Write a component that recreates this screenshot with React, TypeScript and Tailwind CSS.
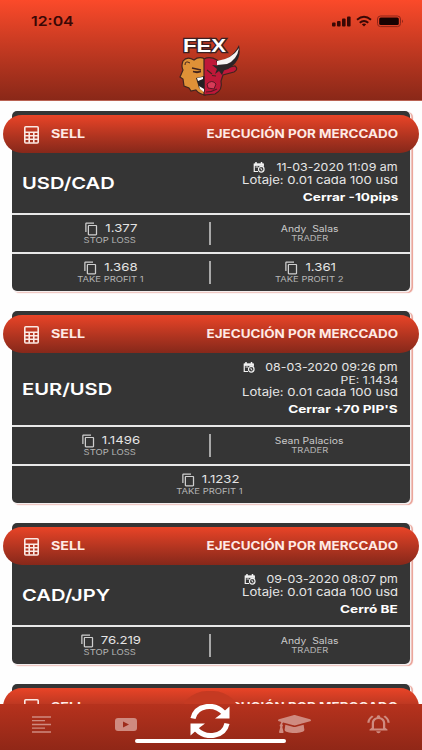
import React from "react";
import { MdContentCopy, MdOutlineNotificationsActive } from "react-icons/md";
import { FaGraduationCap } from "react-icons/fa";

type Signal = {
  pair: string;
  date: string;
  pe?: string;
  result: string;
  stop: string;
  trader: string;
  profits: string[];
  infoHeight: string;
};

const signals: Signal[] = [
  { pair: "USD/CAD", date: "11-03-2020 11:09 am", result: "Cerrar -10pips", stop: "1.377", trader: "Andy  Salas", profits: ["1.368", "1.361"], infoHeight: "h-[60px]" },
  { pair: "EUR/USD", date: "08-03-2020 09:26 pm", pe: "PE: 1.1434", result: "Cerrar +70 PIP'S", stop: "1.1496", trader: "Sean Palacios", profits: ["1.1232"], infoHeight: "h-[72px]" },
  { pair: "CAD/JPY", date: "09-03-2020 08:07 pm", result: "Cerró BE", stop: "76.219", trader: "Andy  Salas", profits: [], infoHeight: "h-[60px]" },
];

function Wide({ children, className = "scale-x-[1.2]" }: { children: React.ReactNode; className?: string }) {
  return <span className={`inline-block whitespace-pre ${className}`}>{children}</span>;
}

function Calculator() {
  return (
    <svg className="h-[18px] w-[15px]" viewBox="0 0 15 18" fill="none" stroke="#fbe9e4" strokeWidth="1.6">
      <rect x="0.8" y="0.8" width="13.4" height="16.2" rx="1" />
      <path d="M1 6.3h13M1 9.8h13M1 13.3h13M5.2 6.3v10.5M9.8 6.3v10.5" />
    </svg>
  );
}

function CalendarClock() {
  return (
    <svg className="h-[11px] w-[12px]" viewBox="0 0 24 22" fill="none" stroke="#f2f2f2" strokeWidth="2.4">
      <path d="M10 19H2.5V4h18v5" />
      <path d="M2 5.5h19" strokeWidth="4.5" />
      <path d="M6 0v5M17 0v5" strokeWidth="3" />
      <circle cx="16.5" cy="14.5" r="5.6" />
      <path d="M16 11.5v3.4l3 1.6M5 10h5" strokeWidth="2" />
    </svg>
  );
}

function Price({ value, label }: { value: string; label: string }) {
  return (
    <div className="flex flex-1 flex-col items-center pt-[7px] pr-[2px]">
      <div className="flex h-[13px] items-center gap-[9px] pr-[2px] text-[11px] text-[#e4e4e4]">
        <MdContentCopy className="mt-[2px] h-[14px] w-[15px] text-[#cfcfcf]" preserveAspectRatio="none" />
        <Wide>{value}</Wide>
      </div>
      <Wide className="scale-x-[1.26] text-[7.5px] leading-[11px] text-[#b5b5b5]">{label}</Wide>
    </div>
  );
}

function Divider() {
  return <div className="mt-[7px] -ml-[1px] h-[23px] w-[2px] bg-[#a8a8a8]" />;
}

function Pill() {
  return (
    <div className="-mx-[9px] flex h-[38px] items-center rounded-[20px] bg-gradient-to-b from-[#e94427] to-[#86281a] pt-[2px] pr-[21px] pl-[21px] text-[11.5px] font-bold text-[#ffeae5]">
      <Calculator />
      <Wide className="ml-[12px] origin-left scale-x-[1.24]">SELL</Wide>
      <Wide className="ml-auto origin-right scale-x-[1.167]">EJECUCIÓN POR MERCCADO</Wide>
    </div>
  );
}

function Card({ s }: { s: Signal }) {
  return (
    <section className="rounded-[5px] bg-[#353535] pt-[3.5px] shadow-[1px_1px_0_0.5px_#f4eeee,2.5px_1.5px_1px_0.5px_#e99c90]">
      <Pill />
      <div className={`flex justify-between pr-[11.5px] pl-[10px] ${s.infoHeight}`}>
        <div className="flex items-center pt-[1px] text-[16.5px] font-semibold text-white">
          <Wide className="origin-left scale-x-[1.22]">{s.pair}</Wide>
        </div>
        <div className="flex flex-col items-end pt-[8px] text-[11px] leading-[13px] text-[#e6e6e6]">
          <div className="flex items-center gap-[25px]">
            <CalendarClock />
            <Wide className="origin-right scale-x-[1.125]">{s.date}</Wide>
          </div>
          {s.pe && <Wide className="h-[12px] origin-right scale-x-[1.22] text-[10px]">{s.pe}</Wide>}
          <Wide className="origin-right scale-x-[1.19]">Lotaje: 0.01 cada 100 usd</Wide>
          <Wide className="mt-[4px] origin-right scale-x-[1.235] font-bold text-white">{s.result}</Wide>
        </div>
      </div>
      <div className="flex h-[39px] border-t-2 border-[#e8e8e8]">
        <Price value={s.stop} label="STOP LOSS" />
        <Divider />
        <div className="flex flex-1 flex-col items-center pt-[9px] pr-[2px] text-[#c9c9c9]">
          <Wide className="scale-x-[1.22] text-[8.5px] leading-[11px]">{s.trader}</Wide>
          <Wide className="scale-x-[1.25] text-[7.5px] leading-[8px] text-[#b5b5b5]">TRADER</Wide>
        </div>
      </div>
      {s.profits.length > 0 && (
        <div className="flex h-[39px] border-t-2 border-[#e8e8e8]">
          <Price value={s.profits[0]} label="TAKE PROFIT 1" />
          {s.profits[1] && <Divider />}
          {s.profits[1] && <Price value={s.profits[1]} label="TAKE PROFIT 2" />}
        </div>
      )}
    </section>
  );
}

function Logo() {
  return (
    <svg className="h-[64px] w-[64px]" viewBox="0 0 64 64">
      <g fontFamily="Liberation Sans, sans-serif" fontWeight="700" fill="#fff" stroke="#3b2022" strokeWidth="2.6" paintOrder="stroke">
        <text x="4" y="17.5" textLength="43" lengthAdjust="spacingAndGlyphs" fontSize="18">FEX</text>
      </g>
      <path d="M26 25Q20 22 15 26Q8 22 4 27Q2 32 4 36L1 43L4 45L5 52L10 54L12 57L17 56Q20 60 26 61V25Z" fill="#df9137" stroke="#42241f" strokeWidth="1.2" />
      <path d="M25 25Q31 22 38 26L46 34L56 32Q60 35 55 38L44 41L42 47Q44 56 36 60L25 61Z" fill="#bf1839" stroke="#42241f" strokeWidth="1.2" />
      <path d="M37 27Q52 27 60 11Q63 25 52 33Q46 39 40 34Z" fill="#2d2427" />
      <path d="M38 27Q53 25 60 14Q58 26 48 30L38 31Z" fill="#f7f3f3" />
      <path d="M33 31Q40 31 46 34L43 41L40 37L36 40L38 35Z" fill="#2d2427" />
      <path d="M13 34L22 36M14 37.5L18 38.5L22 37.5" stroke="#42241f" strokeWidth="1.3" />
      <path d="M17 44L25.5 42V58L20 54Z" fill="#251f22" />
      <path d="M18 44L24 43V45L19 47M20 52L25 55V58L21 55" fill="#fff" />
      <path d="M28 36L33 40M33 41.5L37 42" stroke="#42241f" strokeWidth="1.2" />
      <path d="M28 50Q33 45 37 50L35 55L29 54Z" fill="#d63a57" stroke="#5c1625" strokeWidth="1" />
      <path d="M27 58Q33 58 38 55" fill="none" stroke="#5c1625" strokeWidth="1.2" />
      <path d="M6 31Q6 26 11 29" fill="none" stroke="#42241f" />
    </svg>
  );
}

function StatusIcons() {
  return (
    <svg className="h-[14px] w-[74px]" viewBox="0 0 74 14" fill="#3a0805">
      <rect x="1" y="8.5" width="3.6" height="4" rx="1" />
      <rect x="6" y="7" width="3.6" height="5.5" rx="1" />
      <rect x="11" y="4.5" width="3.6" height="8" rx="1" />
      <rect x="16" y="2.5" width="3.6" height="10" rx="1" />
      <g fill="none" stroke="#3a0805" strokeWidth="1.9">
        <path d="M26 5.7Q33 -0.2 40 5.7M28.7 8.7Q33 5.2 37.3 8.7" />
      </g>
      <path d="M30.8 10.3Q33 8.8 35.2 10.3L33 12.5Z" />
      <rect x="46.5" y="2" width="23" height="10.6" rx="3" fill="none" stroke="#8f2418" />
      <rect x="48.2" y="3.6" width="19.6" height="7.4" rx="1.5" fill="#180202" />
      <path d="M71 5.5q2 1.8 0 3.6z" fill="#8f2418" />
    </svg>
  );
}

function Refresh() {
  return (
    <svg className="h-[34px] w-[40px]" viewBox="0 0 40 34" fill="none" stroke="#fff" strokeWidth="5.2">
      <path d="M3 14.5C6 1 24 -1.5 34 9M37 19.5C34 33 16 35.5 6 25" />
      <path d="M39.5 2.5V14.5H25L31 10ZM0.5 31.5V19.5H15L9 24Z" fill="#fff" stroke="none" />
    </svg>
  );
}

export default function App() {
  return (
    <div className="relative flex h-[750px] w-[422px] flex-col overflow-hidden bg-[#fefefe] font-['Inter','Liberation_Sans',sans-serif]">
      <header className="relative flex h-[101px] shrink-0 justify-center border-b border-[#b96253] bg-gradient-to-b from-[#fb4a2a] to-[#8a2818] pt-[34px]">
        <div className="absolute inset-x-0 top-[14px] flex justify-between pr-[17px] pl-[31px] text-[13px] leading-[14px] font-semibold text-[#3a0805]">
          <Wide className="origin-left scale-x-[1.22]">12:04</Wide>
          <StatusIcons />
        </div>
        <Logo />
      </header>
      <main className="flex flex-col gap-[20.5px] pt-[10px] pr-[12.5px] pl-[12px]">
        {signals.map((s) => (
          <Card key={s.pair} s={s} />
        ))}
        <section className="h-[80px] rounded-[5px] bg-[#353535] pt-[3.5px] shadow-[1px_1px_0_0.5px_#f4eeee,2.5px_1.5px_1px_0.5px_#e99c90]">
          <Pill />
        </section>
      </main>
      <div className="absolute bottom-[3px] left-[179px] h-[56px] w-[62px] rounded-full bg-[#c53a22]" />
      <nav className="absolute inset-x-0 bottom-0 h-[46px] bg-gradient-to-b from-[#b6321d] to-[#902717] text-[#cf8b80]">
        <div className="flex h-[40px] items-center pl-[31px]">
          <svg className="h-[17px] w-[21px]" viewBox="0 0 21 17" stroke="currentColor" strokeWidth="1.3">
            <path d="M1 1h19M1 4.7h13M1 8.5h19M1 12.2h13M1 16h19" />
          </svg>
          <svg className="ml-[63px] h-[13px] w-[22px]" viewBox="0 0 22 13" fill="currentColor">
            <rect width="22" height="13" rx="3" />
            <path d="M8 3.5V9.5L14 6.5Z" fill="#9d2b1a" />
          </svg>
          <div className="-mt-[7px] ml-[53px] w-[40px]"><Refresh /></div>
          <FaGraduationCap className="ml-[48px] h-[24px] w-[33px]" preserveAspectRatio="none" />
          <MdOutlineNotificationsActive className="ml-[54px] h-[22px] w-[27px]" preserveAspectRatio="none" />
        </div>
      </nav>
      <div className="absolute bottom-[7px] left-[135px] h-[4px] w-[151px] rounded-full bg-white" />
    </div>
  );
}
